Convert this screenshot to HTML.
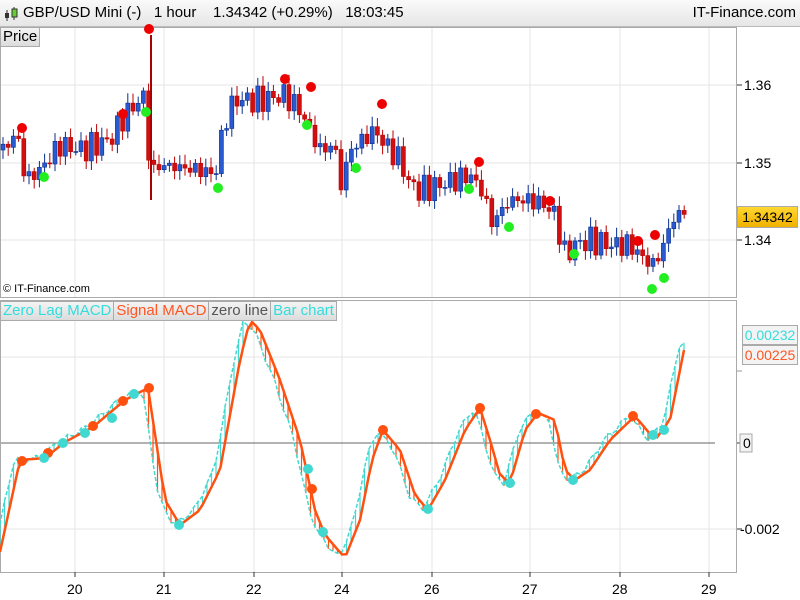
<!DOCTYPE html>
<html><head><meta charset="utf-8"><style>
body{margin:0;width:800px;height:600px;overflow:hidden;background:#fff;font-family:"Liberation Sans",sans-serif}
#top{position:absolute;left:0;top:0;width:800px;height:26px;background:linear-gradient(#fafafa,#e6e6e6);border-bottom:1px solid #bbb;font-size:15px;line-height:26px}
.lab{position:absolute;font-size:15px;background:linear-gradient(#f4f4f4,#dcdcdc);border:1px solid #aaa;height:18px;line-height:18px;padding:0 2px}
</style></head><body>
<div id="top"><svg style="position:absolute;left:3px;top:6px" width="16" height="16"><line x1="4" y1="4" x2="4" y2="15" stroke="#333"/><rect x="2" y="7" width="4" height="5" fill="#333"/><line x1="11" y1="1" x2="11" y2="14" stroke="#333"/><rect x="9" y="3" width="5" height="8" fill="#6c3" stroke="#333"/></svg>
<span style="position:absolute;left:23px">GBP/USD Mini (-) &nbsp; 1 hour &nbsp; &nbsp;1.34342 (+0.29%) &nbsp; 18:03:45</span>
<span style="position:absolute;right:4px">IT-Finance.com</span></div>
<svg id="s" width="800" height="600" style="position:absolute;left:0;top:0"></svg>
<div class="lab" style="left:0;top:27px;font-size:15px">Price</div>
<div style="position:absolute;left:3px;top:283px;font-size:11px">© IT-Finance.com</div>
<div style="position:absolute;left:0;top:301px;height:19px;display:flex;font-size:15px;line-height:19px;letter-spacing:0">
<div class="lab" style="position:static;color:#3dd;">Zero Lag MACD</div><div class="lab" style="position:static;color:#f52;border-left:0">Signal MACD</div><div class="lab" style="position:static;color:#555;border-left:0">zero line</div><div class="lab" style="position:static;color:#3dd;border-left:0">Bar chart</div></div>
<div style="position:absolute;left:737px;top:206px;width:59px;height:20px;background:linear-gradient(#ffd830,#f0b000);border:1px solid #aaa;font-size:14px;line-height:20px;text-align:center">1.34342</div>
<div style="position:absolute;left:742px;top:325px;width:54px;height:18px;background:#f3f3f3;border:1px solid #aaa;font-size:14px;line-height:18px;color:#3dd;text-align:center">0.00232</div>
<div style="position:absolute;left:742px;top:345px;width:54px;height:18px;background:#f3f3f3;border:1px solid #aaa;font-size:14px;line-height:18px;color:#f52;text-align:center">0.00225</div>
<script>
var s=document.getElementById('s'),h='';
function L(a,b,c,d,col,w,ex){h+='<line x1="'+a+'" y1="'+b+'" x2="'+c+'" y2="'+d+'" stroke="'+col+'" stroke-width="'+(w||1)+'" '+(ex||'')+'/>';}
function T(x,y,t,ex){h+='<text x="'+x+'" y="'+y+'" font-size="14" font-family="Liberation Sans" '+(ex||'')+'>'+t+'</text>';}
var xs=[75,164,254,342,432,530,620,709];
xs.forEach(function(x){L(x,27,x,297,'#e6e6e6');L(x,301,x,572,'#e6e6e6');});
[85,163,240].forEach(function(y){L(0,y,737,y,'#e6e6e6');});
[357,529].forEach(function(y){L(0,y,737,y,'#e6e6e6');});
L(0,443,715,443,'#666');
h+='<rect x="0.5" y="27.5" width="736" height="270" fill="none" stroke="#aaa"/>';
h+='<rect x="0.5" y="300.5" width="736" height="272" fill="none" stroke="#aaa"/>';
[[85,'1.36'],[163,'1.35'],[240,'1.34']].forEach(function(a){L(737,a[0],742,a[0],'#333');T(744,a[0]+5,a[1]);});
L(737,216,742,216,'#333');L(737,371,742,371,'#999');L(737,443,742,443,'#333');L(737,529,742,529,'#333');
h+='<rect x="740" y="434" width="12" height="18" fill="#f3f3f3" stroke="#aaa"/>';T(743,448,'0');
T(740,534,'-0.002');
var lx=['20','21','22','24','26','27','28','29'];xs.forEach(function(x,i){L(x,572,x,577,'#333');T(x-8,594,lx[i]);});
var P=[[0,150],[18,135],[25,180],[40,170],[60,145],[80,150],[110,140],[125,115],[145,95],[150,175],[160,165],[200,170],[215,175],[225,120],[235,100],[260,100],[285,95],[300,110],[310,130],[320,150],[335,145],[340,190],[350,150],[375,130],[385,145],[400,160],[410,185],[420,190],[440,185],[470,175],[485,195],[490,225],[510,200],[530,200],[545,205],[555,215],[565,255],[575,245],[590,240],[610,245],[630,245],[645,260],[655,265],[665,240],[675,215],[685,213]];
function ip(A,x){for(var i=1;i<A.length;i++)if(x<=A[i][0]){var a=A[i-1],b=A[i];return a[1]+(b[1]-a[1])*(x-a[0])/(b[0]-a[0]);}return A[A.length-1][1];}
var prev=150;
for(var x=3;x<=686;x+=5.2){var c=ip(P,x)+9*Math.sin(x*1.7)+5*Math.sin(x*0.53);var o=prev;var hi=Math.min(o,c)-3-7*Math.abs(Math.sin(x*2.3)),lo=Math.max(o,c)+3+6*Math.abs(Math.cos(x*1.1));
var up=c<o,col=up?'#0a2f8f':'#b00';L(x.toFixed(1),hi.toFixed(1),x.toFixed(1),lo.toFixed(1),col);
h+='<rect x="'+(x-2).toFixed(1)+'" y="'+Math.min(o,c).toFixed(1)+'" width="4" height="'+Math.max(1,Math.abs(o-c)).toFixed(1)+'" fill="'+(up?'#2a5ad0':'#d01010')+'" stroke="'+col+'" stroke-width="0.6"/>';prev=c;}
L(151,35,151,200,'#a00',2);
[[22,128],[123,114],[149,29],[285,79],[311,87],[382,104],[479,162],[550,201],[638,241],[655,235]].forEach(function(p){h+='<circle cx="'+p[0]+'" cy="'+p[1]+'" r="5" fill="#e00"/>';});
[[44,177],[146,112],[218,188],[307,125],[356,168],[469,189],[509,227],[574,254],[652,289],[664,278]].forEach(function(p){h+='<circle cx="'+p[0]+'" cy="'+p[1]+'" r="5" fill="#2e2"/>';});
var M=[[0,552],[20,460],[45,458],[65,442],[93,427],[125,400],[148,388],[165,500],[180,525],[200,510],[220,470],[240,360],[250,320],[260,330],[280,380],[300,440],[315,510],[325,535],[345,558],[360,520],[372,460],[383,430],[400,450],[415,495],[428,510],[445,480],[465,430],[480,408],[490,440],[500,475],[510,483],[525,430],[538,413],[555,420],[565,470],[575,480],[590,470],[610,440],[635,416],[655,440],[670,420],[685,345]];
var po='',pc='';
for(var x=0;x<=688;x+=4.5){var o=ip(M,x),cy=ip(M,x+6)+3*Math.sin(x);if(x>685)cy=o;po+=x.toFixed(1)+','+o.toFixed(1)+' ';pc+=x.toFixed(1)+','+cy.toFixed(1)+' ';
var col=cy<o?'#40d8d0':'#ff5010';L(x.toFixed(1),o.toFixed(1),x.toFixed(1),cy.toFixed(1),col,1.2);}
h+='<polyline points="'+pc+'" fill="none" stroke="#40d8d0" stroke-width="1.5" stroke-dasharray="4,2"/>';
h+='<polyline points="'+po+'" fill="none" stroke="#ff5010" stroke-width="2.5"/>';
[[22,461],[48,453],[93,426],[123,401],[149,388],[312,489],[383,430],[480,408],[536,414],[633,416]].forEach(function(p){h+='<circle cx="'+p[0]+'" cy="'+p[1]+'" r="5" fill="#ff5010"/>';});
[[44,458],[63,443],[85,433],[112,418],[134,394],[179,525],[308,469],[323,532],[428,509],[510,483],[573,480],[653,435],[664,430]].forEach(function(p){h+='<circle cx="'+p[0]+'" cy="'+p[1]+'" r="5" fill="#40d8d0"/>';});
s.innerHTML=h;
</script>
</body></html>
